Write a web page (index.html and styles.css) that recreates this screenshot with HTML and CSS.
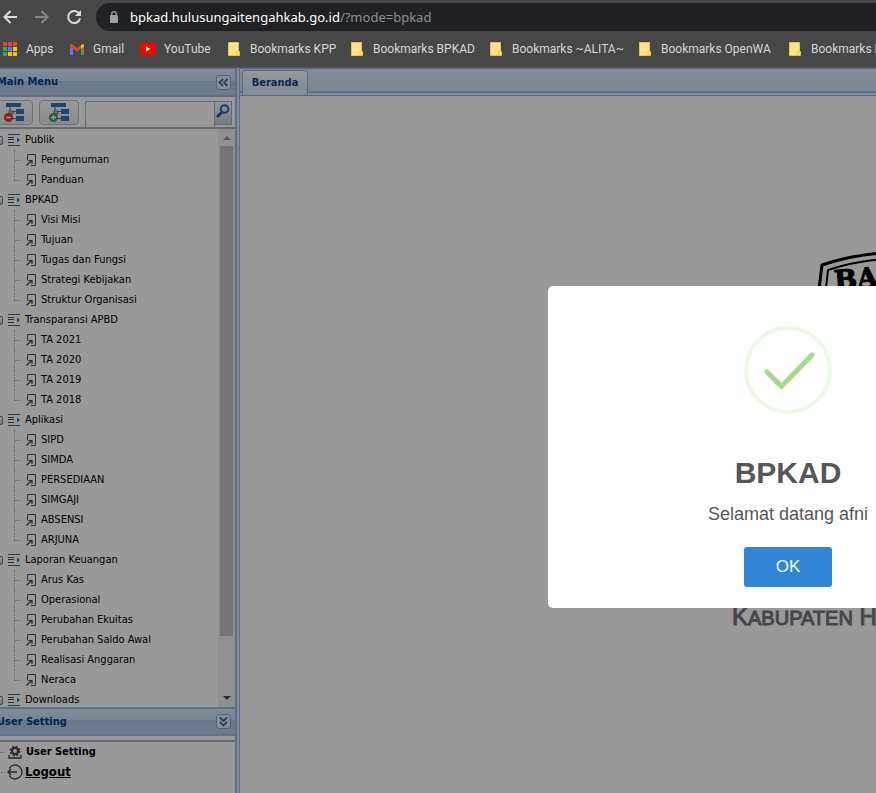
FILE: index.html
```html
<!DOCTYPE html>
<html lang="id">
<head>
<meta charset="utf-8">
<title>BPKAD</title>
<link rel="stylesheet" href="styles.css">
</head>
<body>
<svg class="defs" aria-hidden="true">
  <symbol id="leaf" viewBox="0 0 10 14"><path d="M1.500 7.500V1.500h8v11h-4.500" fill="none" stroke="#555"/><path d="M.5 12.500L5.500 7.500M2.500 7.500h3.500v3.500" fill="none" stroke="#444" stroke-width="1.200"/></symbol>
  <symbol id="group" viewBox="0 0 12 12"><path d="M0 .5h12M0 11.500h12" stroke="#4c6a78"/><path d="M0 3.500h6M0 5.500h6M0 8.500h6" stroke="#555"/><path d="M9 3.500l3 2.500-3 2.500z" fill="#1b7fd0"/></symbol>
  <symbol id="note" viewBox="0 0 12 14"><path d="M.5.5h10v9h1v4H.5z" fill="#ffe48f" stroke="#e8c53a"/><path d="M9 13V9.500h2" fill="none" stroke="#e8c53a"/></symbol>
  <symbol id="nodes" viewBox="0 0 20 20"><path d="M2 1h15v4H2zM12 7h8v5h-8zM12 14h8v5h-8z" fill="#2f76b5"/><path d="M6 5v4M8 9.500h4M7 10v6.500h5M5 9h4v3H5z" fill="none" stroke="#666"/></symbol>
</svg>

<header class="browser">
  <div class="nav">
    <button class="navbtn" aria-label="Kembali"><svg width="16" height="16" viewBox="0 0 16 16"><path d="M15 8H3M8.500 2L2.500 8l6 6" fill="none" stroke="#dcdcdc" stroke-width="2"/></svg></button>
    <button class="navbtn" aria-label="Maju"><svg width="16" height="16" viewBox="0 0 16 16"><path d="M1 8h12M7.500 2l6 6-6 6" fill="none" stroke="#858585" stroke-width="2"/></svg></button>
    <button class="navbtn" aria-label="Muat ulang"><svg width="16" height="16" viewBox="0 0 16 16"><path d="M13 4.500A6 6 0 1 0 14 9.500" fill="none" stroke="#dcdcdc" stroke-width="2"/><path d="M15 1v6H9z" fill="#dcdcdc"/></svg></button>
    <div class="address">
      <svg width="10" height="12" viewBox="0 0 10 12"><rect y="4" x="1" width="8" height="8" rx="1" fill="#9aa0a6"/><path d="M2.700 5V3a2.300 2.300 0 0 1 4.600 0v2" fill="none" stroke="#9aa0a6" stroke-width="1.300"/></svg>
      <span class="url">bpkad.hulusungaitengahkab.go.id<span class="path">/?mode=bpkad</span></span>
    </div>
  </div>
  <nav class="bookmarks">
    <a href="#" class="apps"><svg width="14" height="14" viewBox="0 0 14 14"><path d="M0 0h4v4H0zM5 0h4v4H5zM10 0h4v4h-4z" fill="#ea4335"/><path d="M0 5h4v4H0zM0 10h4v4H0z" fill="#34a853"/><path d="M5 5h4v4H5z" fill="#4285f4"/><path d="M10 5h4v4h-4zM5 10h4v4H5zM10 10h4v4h-4z" fill="#fbbc04"/></svg>Apps</a>
    <a href="#" class="gmail"><svg width="14" height="11" viewBox="0 0 14 11"><path d="M0 2l3 2.200V11H1a1 1 0 0 1-1-1z" fill="#4285f4"/><path d="M14 2l-3 2.200V11h2a1 1 0 0 0 1-1z" fill="#34a853"/><path d="M0 1.500C0 0 1.500-.3 2.500.5L7 4 11 .8v3.700L7 7.500 0 2.700z" fill="#ea4335"/><path d="M11 1l.8-.6C13-.3 14 .3 14 1.500v1.200l-3 2z" fill="#fbbc04"/></svg>Gmail</a>
    <a href="#" class="youtube"><svg width="16" height="12" viewBox="0 0 16 12"><rect width="16" height="12" rx="3" fill="#f00"/><path d="M6 3.500v5L10.500 6z" fill="#fff"/></svg>YouTube</a>
    <a href="#" class="kpp"><svg width="12" height="14"><use href="#note"/></svg>Bookmarks KPP</a>
    <a href="#" class="bpkad"><svg width="12" height="14"><use href="#note"/></svg>Bookmarks BPKAD</a>
    <a href="#" class="alita"><svg width="12" height="14"><use href="#note"/></svg>Bookmarks ~ALITA~</a>
    <a href="#" class="openwa"><svg width="12" height="14"><use href="#note"/></svg>Bookmarks OpenWA</a>
    <a href="#" class="more"><svg width="12" height="14"><use href="#note"/></svg>Bookmarks N</a>
  </nav>
</header>

<div class="app">
  <aside class="sidebar">
    <h2 class="panel-title">Main Menu
      <button class="tool" aria-label="Tutup panel"><svg width="11" height="9" viewBox="0 0 11 9"><path d="M5 1L1.500 4.500 5 8M9.500 1L6 4.500 9.500 8" fill="none" stroke="#416a9e" stroke-width="1.800"/></svg></button>
    </h2>
    <div class="toolbar">
      <button class="tbtn" aria-label="Ciutkan semua"><svg width="20" height="20" viewBox="0 0 20 20"><use href="#nodes"/><circle cx="4.500" cy="15.500" r="4.500" fill="#d4392b"/><path d="M2 15.500h5" stroke="#fff" stroke-width="1.600"/></svg></button>
      <button class="tbtn" aria-label="Bentangkan semua"><svg width="20" height="20" viewBox="0 0 20 20"><use href="#nodes"/><circle cx="4.500" cy="15.500" r="4.500" fill="#2fa36b"/><path d="M2 15.500h5M4.500 13v5" stroke="#fff" stroke-width="1.400"/></svg></button>
      <div class="search">
        <input type="text" aria-label="Cari menu">
        <button aria-label="Cari"><svg width="14" height="14" viewBox="0 0 14 14"><path d="M1 13l5-5" stroke="#264a9c" stroke-width="2.500"/><circle cx="8.500" cy="5" r="3.800" fill="#d5efff" stroke="#2f66b0" stroke-width="2"/></svg></button>
      </div>
    </div>
    <div class="tree-area">
      <ul class="tree">
        <li><div class="group"><i></i><svg width="12" height="12"><use href="#group"/></svg>Publik</div>
          <ul>
            <li><svg width="10" height="14"><use href="#leaf"/></svg>Pengumuman</li>
            <li><svg width="10" height="14"><use href="#leaf"/></svg>Panduan</li>
          </ul></li>
        <li><div class="group"><i></i><svg width="12" height="12"><use href="#group"/></svg>BPKAD</div>
          <ul>
            <li><svg width="10" height="14"><use href="#leaf"/></svg>Visi Misi</li>
            <li><svg width="10" height="14"><use href="#leaf"/></svg>Tujuan</li>
            <li><svg width="10" height="14"><use href="#leaf"/></svg>Tugas dan Fungsi</li>
            <li><svg width="10" height="14"><use href="#leaf"/></svg>Strategi Kebijakan</li>
            <li><svg width="10" height="14"><use href="#leaf"/></svg>Struktur Organisasi</li>
          </ul></li>
        <li><div class="group"><i></i><svg width="12" height="12"><use href="#group"/></svg>Transparansi APBD</div>
          <ul>
            <li><svg width="10" height="14"><use href="#leaf"/></svg>TA 2021</li>
            <li><svg width="10" height="14"><use href="#leaf"/></svg>TA 2020</li>
            <li><svg width="10" height="14"><use href="#leaf"/></svg>TA 2019</li>
            <li><svg width="10" height="14"><use href="#leaf"/></svg>TA 2018</li>
          </ul></li>
        <li><div class="group"><i></i><svg width="12" height="12"><use href="#group"/></svg>Aplikasi</div>
          <ul>
            <li><svg width="10" height="14"><use href="#leaf"/></svg>SIPD</li>
            <li><svg width="10" height="14"><use href="#leaf"/></svg>SIMDA</li>
            <li><svg width="10" height="14"><use href="#leaf"/></svg>PERSEDIAAN</li>
            <li><svg width="10" height="14"><use href="#leaf"/></svg>SIMGAJI</li>
            <li><svg width="10" height="14"><use href="#leaf"/></svg>ABSENSI</li>
            <li><svg width="10" height="14"><use href="#leaf"/></svg>ARJUNA</li>
          </ul></li>
        <li><div class="group"><i></i><svg width="12" height="12"><use href="#group"/></svg>Laporan Keuangan</div>
          <ul>
            <li><svg width="10" height="14"><use href="#leaf"/></svg>Arus Kas</li>
            <li><svg width="10" height="14"><use href="#leaf"/></svg>Operasional</li>
            <li><svg width="10" height="14"><use href="#leaf"/></svg>Perubahan Ekuitas</li>
            <li><svg width="10" height="14"><use href="#leaf"/></svg>Perubahan Saldo Awal</li>
            <li><svg width="10" height="14"><use href="#leaf"/></svg>Realisasi Anggaran</li>
            <li><svg width="10" height="14"><use href="#leaf"/></svg>Neraca</li>
          </ul></li>
        <li><div class="group"><i></i><svg width="12" height="12"><use href="#group"/></svg>Downloads</div></li>
      </ul>
      <div class="scroll">
        <svg width="8" height="4" viewBox="0 0 8 4"><path d="M0 4l4-4 4 4z" fill="#8a8a8a"/></svg>
        <div class="track"><div class="thumb"></div></div>
        <svg width="8" height="4" viewBox="0 0 8 4"><path d="M0 0l4 4 4-4z" fill="#505050"/></svg>
      </div>
    </div>
    <h2 class="panel-title user-title">User Setting
      <button class="tool" aria-label="Ciutkan"><svg width="9" height="11" viewBox="0 0 9 11"><path d="M1 1.500L4.500 5 8 1.500M1 6L4.500 9.500 8 6" fill="none" stroke="#416a9e" stroke-width="1.800"/></svg></button>
    </h2>
    <ul class="user-menu">
      <li><svg width="14" height="14" viewBox="0 0 14 14"><path d="M1 10v3h12v-3" fill="none" stroke="#444" stroke-width="1.300"/><circle cx="7" cy="6" r="3" fill="none" stroke="#444" stroke-width="2"/><circle cx="7" cy="6" r="4.500" fill="none" stroke="#444" stroke-width="1.800" stroke-dasharray="2 1.534"/></svg>User Setting</li>
      <li class="logout"><svg width="16" height="16" viewBox="0 0 16 16"><path d="M2 4.500a7 7 0 1 1 0 7" fill="none" stroke="#444" stroke-width="1.300"/><path d="M10 8H1M4 5L1 8l3 3" fill="none" stroke="#444" stroke-width="1.400"/></svg><a href="#">Logout</a></li>
    </ul>
  </aside>

  <main class="center">
    <div class="tabs"><button class="tab">Beranda</button></div>
    <div class="content">
      <svg class="emblem" width="180" height="340" viewBox="0 0 180 340" role="img" aria-label="BAKEUDA">
        <path d="M0 46L4 14Q42 1 90 1t86 13l4 32" fill="none" stroke="#000" stroke-width="3"/>
        <path d="M7 46l3-27Q45 7 90 7t80 12l3 27" fill="none" stroke="#000" stroke-width="2"/>
        <text x="17" y="39" transform="rotate(-5 17 39)">BA</text>
      </svg>
      <p class="region">K<small>ABUPATEN</small> H<small>ULU</small> S<small>UNGAI</small> T<small>ENGAH</small></p>
    </div>
  </main>
  <div class="mask"></div>
</div>

<section class="modal" role="dialog" aria-labelledby="dialog-title">
  <svg width="88" height="88" viewBox="0 0 88 88"><circle cx="44" cy="44" r="42" fill="none" stroke="#edf8e7" stroke-width="4"/><path d="M23 46l14.500 14.500L68 29" fill="none" stroke="#a5dc86" stroke-width="5" stroke-linecap="round"/></svg>
  <h1 id="dialog-title">BPKAD</h1>
  <p>Selamat datang afni</p>
  <button class="ok">OK</button>
</section>
</body>
</html>
```
FILE: styles.css
```css
* { box-sizing: border-box; }
html, body { height: 100%; }
body {
  margin: 0;
  display: flex;
  flex-direction: column;
  overflow: hidden;
  position: relative;
  font: 11px/20px "DejaVu Sans Condensed", "Noto Sans", sans-serif;
}
h1, h2, p, ul { margin: 0; padding: 0; }
ul { list-style: none; }
svg { display: block; flex: none; }
button { padding: 0; font: inherit; }
.defs { position: absolute; width: 0; height: 0; }

.browser {
  flex: none;
  height: 68px;
  background: #474747;
  border-bottom: 1px solid #555;
  font-family: "Noto Sans", sans-serif;
  overflow: hidden;
}
.nav { display: flex; align-items: center; gap: 16px; height: 34px; padding: 0 0 0 2px; }
.navbtn { border: 0; background: none; }
.address {
  flex: 1;
  display: flex;
  align-items: center;
  gap: 11px;
  height: 28px;
  margin-left: -2px;
  padding-left: 13px;
  border-radius: 14px 0 0 14px;
  background: #202124;
}
.url { color: #fff; font-size: 13px; white-space: nowrap; }
.path { color: #8d9196; }
.bookmarks { display: flex; align-items: center; height: 30px; padding-left: 3px; }
.bookmarks a {
  flex: none;
  display: flex;
  align-items: center;
  gap: 9px;
  color: #d6d6d6;
  font-family: Roboto, sans-serif;
  font-size: 12px;
  text-decoration: none;
  white-space: nowrap;
}
.bookmarks .apps { width: 67px; }
.bookmarks .gmail { width: 70px; }
.bookmarks .youtube { width: 88px; gap: 8px; }
.bookmarks .kpp { width: 123px; }
.bookmarks .bpkad { width: 139px; }
.bookmarks .alita { width: 149px; }
.bookmarks .openwa { width: 150px; }
.bookmarks .kpp, .bookmarks .bpkad, .bookmarks .alita, .bookmarks .openwa, .bookmarks .more { gap: 10px; }

.app { position: relative; flex: 1; min-height: 0; display: flex; gap: 2px; background: #dfe8f6; overflow: hidden; }
.mask { position: absolute; inset: 0; background: rgba(0, 0, 0, .4); }

.sidebar {
  flex: none;
  display: flex;
  flex-direction: column;
  width: 242px;
  margin-left: -5px;
  border-right: 2px solid #99bbe8;
  background: #fff;
}
.panel-title {
  flex: none;
  display: flex;
  align-items: center;
  justify-content: space-between;
  height: 29px;
  padding: 0 4px 0 2px;
  border-top: 1px solid #99bbe8;
  border-bottom: 2px solid #99bbe8;
  background: linear-gradient(#dae7f6, #cddef3 45%, #abc7ec 46%, #b8cfee);
  color: #04408c;
  font-size: 11px;
  font-weight: bold;
}
.tool {
  display: grid;
  place-items: center;
  width: 15px;
  height: 15px;
  border: 1px solid #7ba5d8;
  border-radius: 3px;
  background: #e3eefb;
}
.user-title { border-top-width: 2px; }
.toolbar {
  flex: none;
  display: flex;
  align-items: center;
  gap: 6px;
  height: 32px;
  padding: 0 3px 0 0;
  border-bottom: 2px solid #a9b0c2;
}
.tbtn {
  flex: none;
  display: grid;
  place-items: center;
  width: 40px;
  height: 25px;
  border: 1px solid #bbb;
  border-radius: 4px;
  background: linear-gradient(#fff, #e6e6e6);
}
.tbtn:first-child { width: 38px; }
.search { flex: 1; min-width: 0; display: flex; height: 26px; align-self: flex-end; }
.search input {
  flex: 1;
  min-width: 0;
  padding: 0 4px;
  border: 1px solid #a9b0c2;
  border-bottom: 0;
  background: #fff;
}
.search button {
  display: grid;
  justify-items: center;
  width: 17px;
  height: 24px;
  padding-top: 2px;
  border: 1px solid #a9b0c2;
  border-left: 0;
  background: linear-gradient(#fff, #ccc);
}

.tree-area { flex: 1; min-height: 0; display: flex; overflow: hidden; }
.tree { flex: 1; color: #000; }
.group { display: flex; align-items: center; gap: 5px; height: 20px; }
.group i { width: 8px; height: 9px; border: 1px solid #6f8596; border-radius: 2px; background: linear-gradient(#fff, #b8c4d0); }
.tree, .user-menu { line-height: 22px; }
.tree ul li { position: relative; display: flex; align-items: center; gap: 5px; height: 20px; padding-left: 31px; }
.tree ul li::before { content: ""; position: absolute; left: 19px; top: 0; height: 20px; border-left: 1px dotted #aaa; }
.tree ul li:last-child::before { height: 11px; }
.tree ul li::after { content: ""; position: absolute; left: 20px; top: 10px; width: 6px; border-top: 1px dotted #aaa; }
.scroll {
  display: flex;
  flex-direction: column;
  align-items: center;
  gap: 6px;
  width: 17px;
  padding: 7px 0;
  background: #f1f1f1;
}
.track { flex: 1; width: 13px; }
.thumb { height: 90%; background: #c1c1c1; }
.tree { padding-top: 1px; line-height: 20px; }
.user-menu {
  flex: none;
  height: 53px;
  margin-top: 4px;
  border-top: 2px solid #a9b0c2;
  font-weight: bold;
}
.user-menu li { display: flex; align-items: center; gap: 4px; height: 20px; padding-left: 5px; }
.user-menu li::before { content: ""; width: 4px; border-top: 1px dotted #aaa; }
.user-menu li.logout { gap: 2px; padding-left: 6px; font-size: 13px; }
.user-menu a { color: #000; }

.center { flex: 1; min-width: 0; display: flex; flex-direction: column; border-left: 1px solid #99bbe8; background: #fff; }
.tabs {
  flex: none;
  display: flex;
  align-items: flex-end;
  height: 28px;
  padding: 0 2px;
  border-top: 1px solid #8db2e3;
  border-bottom: 1px solid #8db2e3;
  background: linear-gradient(#dae7f6, #d2dff0 22px, #8db2e3 23px, #8db2e3 24px, #deecfd 24px);
}
.tab {
  width: 66px;
  height: 25px;
  border: 1px solid #8db2e3;
  border-bottom: 0;
  border-radius: 4px 4px 0 0;
  background: linear-gradient(#fff, #deecfd 60%);
  color: #15428b;
  font-weight: bold;
}
.content { flex: 1; min-height: 0; overflow: hidden; padding: 155px 0 0 492px; }
.emblem { margin-left: 86px; }
.emblem text { font: bold 27px "DejaVu Serif", serif; stroke: #000; stroke-width: 1px; }
.region {
  margin-top: 11px;
  color: #747680;
  font: 24px/30px "Liberation Sans", sans-serif;
  -webkit-text-stroke: 1px #747680;
  white-space: nowrap;
}
.region small { font-size: 20px; }

.modal {
  position: absolute;
  top: 286px;
  left: 548px;
  width: 480px;
  display: flex;
  flex-direction: column;
  align-items: center;
  padding: 40px 20px 21px;
  border-radius: 5px;
  background: #fff;
  color: #575757;
  font-family: "Liberation Sans", sans-serif;
}
.modal h1 { margin-top: 39px; font-size: 30px; line-height: 40px; }
.modal p { margin-top: 10px; font-size: 18px; line-height: 22px; }
.ok {
  width: 88px;
  height: 40px;
  margin-top: 22px;
  border: 0;
  border-radius: 3px;
  background: #3085d6;
  color: #fff;
  font-size: 17px;
}
```
